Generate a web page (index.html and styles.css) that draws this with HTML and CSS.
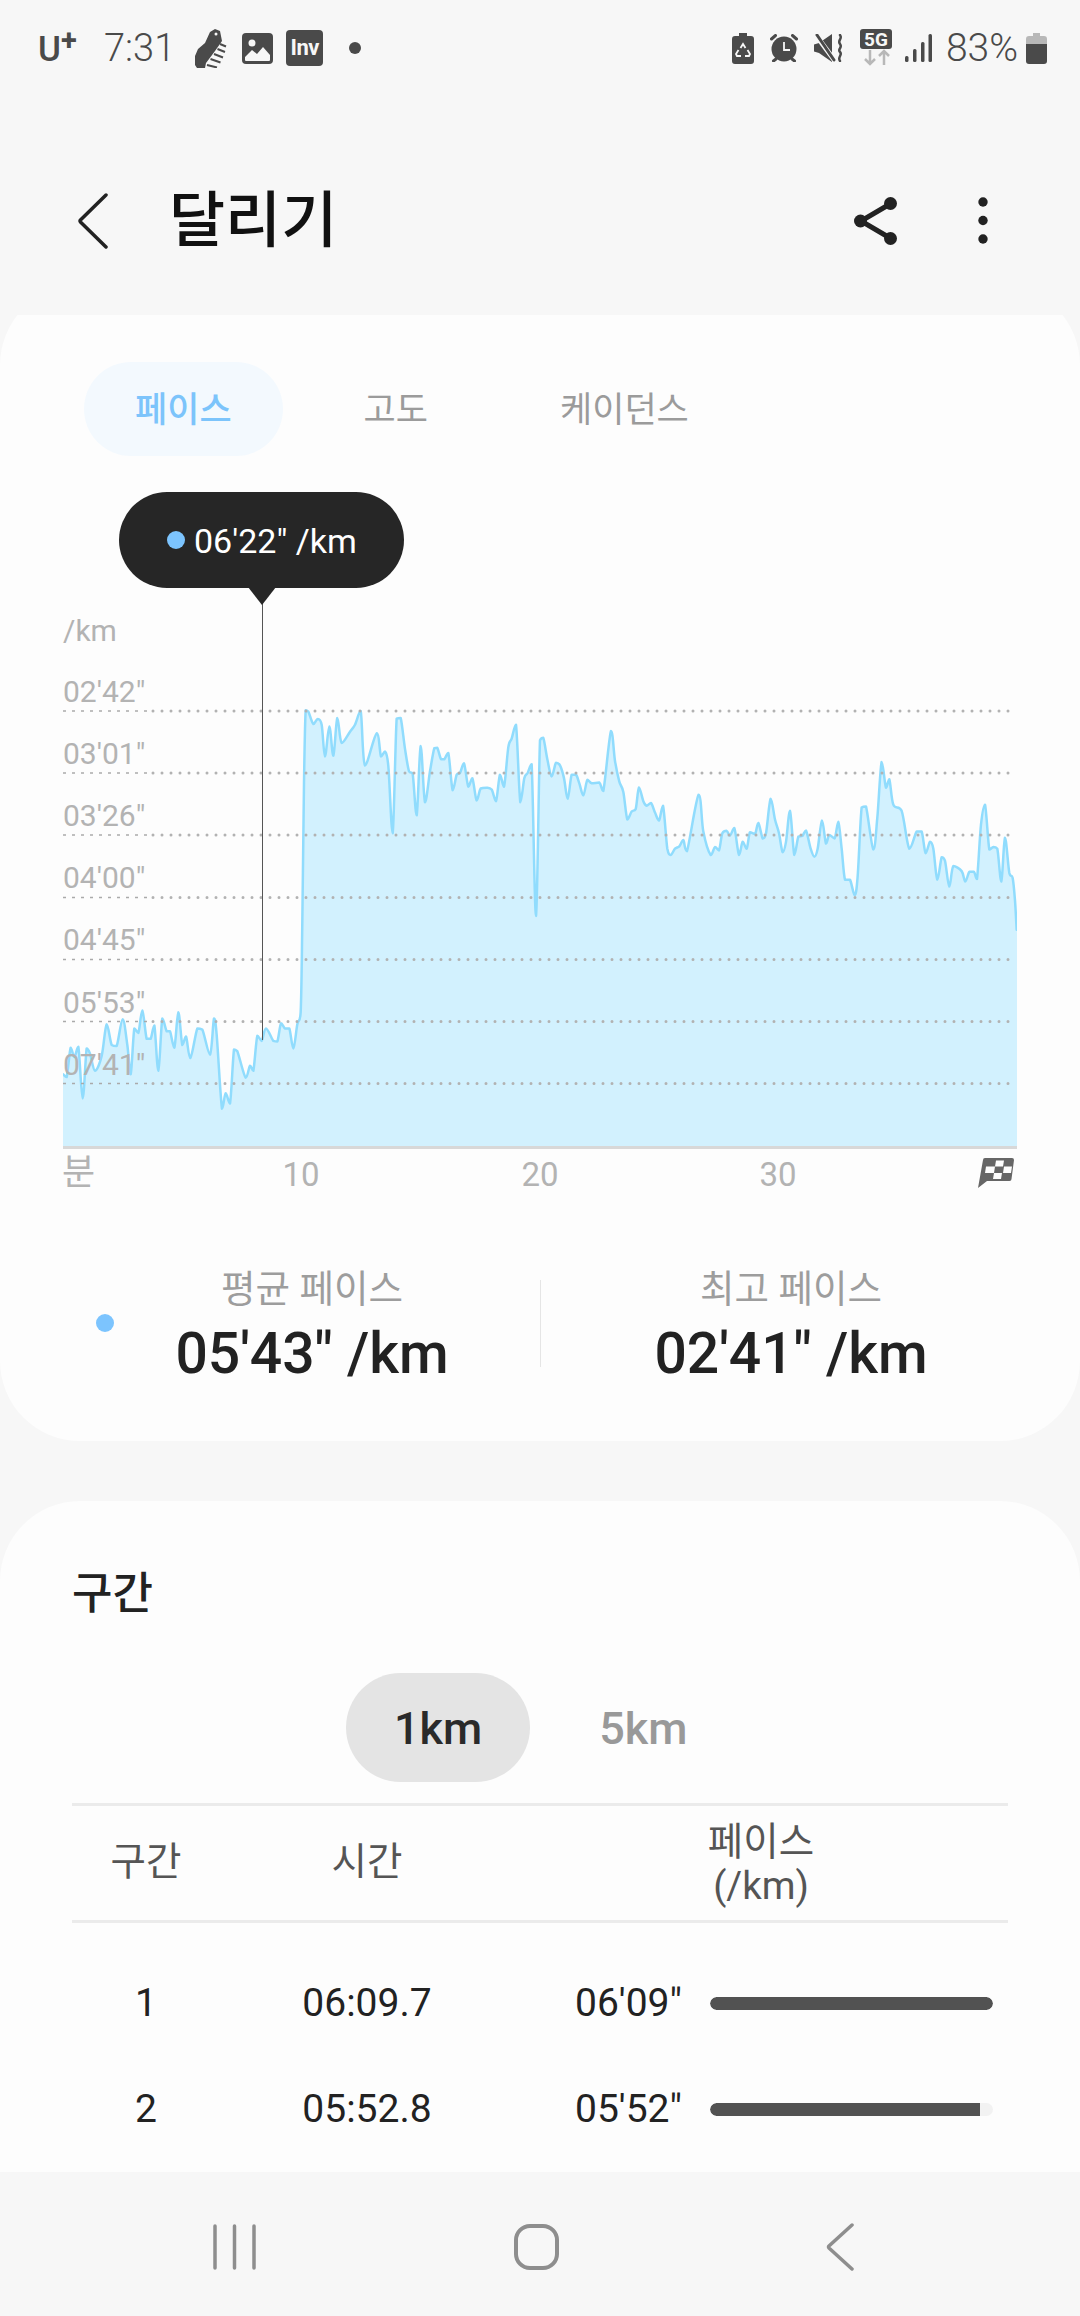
FILE: index.html
```html
<!DOCTYPE html>
<html lang="ko">
<head>
<meta charset="utf-8">
<title>달리기</title>
<link rel="stylesheet" href="styles.css">
<script src="script.js" defer></script>
</head>
<body>
<div class="phone">
  <header class="status">
    <div class="status-left">
      <span class="carrier">U<span class="carrier-plus">+</span></span>
      <span class="clock">7:31</span>
      <svg class="ic-shoe" viewBox="0 0 32 39"><path class="ink" d="M15 3l5-3 5 2 2 10-7 10-9 12-1 5H2l-2-3v-9l3-7 7-6z"/><path class="stripe" d="M25 15l6 2.500M22.500 20l7.500 3M19 25l9 3.500M15.500 30l10 3.500M12 36l10 2.500"/><circle class="cut-dot" cx="21" cy="5" r="1.500"/></svg>
      <svg class="ic-image" viewBox="0 0 31 31"><rect class="ink" width="31" height="31" rx="4"/><circle class="paper" cx="10" cy="10" r="3.500"/><path class="paper" d="M3 27v-3l7-7 5 4 6-7 7 8v5a1 1 0 0 1-1 1H4a1 1 0 0 1-1-1z"/></svg>
      <span class="inv">Inv</span>
      <span class="notif-dot"></span>
    </div>
    <div class="status-right">
      <svg class="ic-care" viewBox="0 0 22 31"><path class="ink" d="M7 0h8v3h4a3 3 0 0 1 3 3v22a3 3 0 0 1-3 3H3a3 3 0 0 1-3-3V6a3 3 0 0 1 3-3h4z"/><path class="cut" d="M8.500 15l2.500-4 2.500 4M15.500 17l2.500 4-1 2h-4M9 23H5l-1-2 2.500-4"/></svg>
      <svg class="ic-alarm" viewBox="0 0 28 28"><circle class="ink" cx="14" cy="15" r="12.500"/><path class="cut" d="M14 8v8h6"/><path class="ink-line" d="M1.500 5l4-3.500M26.500 5l-4-3.500M6 25l-2.500 2M22 25l2.500 2"/></svg>
      <svg class="ic-mute" viewBox="0 0 30 28"><path class="ink" d="M0 10.500l5-1.500L18 0v28L5 19l-5-1.500z"/><path class="slash" d="M1 0l20 27"/><path class="ink-line" d="M3 1l17 25"/><path class="wave" d="M26 1c3 4-3 5 0 9s-3 5 0 8-3 5 0 9"/></svg>
      <svg class="ic-5g" viewBox="0 0 32 37"><rect class="ink" width="32" height="20" rx="3"/><text class="five-g" x="16" y="16.500">5G</text><path class="arrows" d="M10 21v14M5 30l5 5 5-5M24 36V22M19 27l5-5 5 5"/></svg>
      <svg class="ic-signal" viewBox="0 0 27 28"><rect class="ink" x="0" y="22" width="3.500" height="6" rx="1.500"/><rect class="ink" x="8" y="15" width="3.500" height="13" rx="1.500"/><rect class="ink" x="16" y="8" width="3.500" height="20" rx="1.500"/><rect class="ink" x="23.500" y="0" width="3.500" height="28" rx="1.500"/></svg>
      <span class="percent">83%</span>
      <svg class="ic-batt" viewBox="0 0 21 31"><path class="batt-top" d="M7 0h7v3h4a3 3 0 0 1 3 3v6H0V6a3 3 0 0 1 3-3h4z"/><path class="ink" d="M0 11h21v17a3 3 0 0 1-3 3H3a3 3 0 0 1-3-3z"/></svg>
    </div>
  </header>

  <div class="appbar">
    <svg class="ic-back" viewBox="0 0 30 56"><path d="M28 2L2.500 27a1.500 1.500 0 0 0 0 2L28 54"/></svg>
    <h1 class="title">달리기</h1>
    <svg class="ic-share" viewBox="0 0 43 48"><path class="share-line" d="M36 7L7 24l29 17"/><circle class="share-node" cx="36.500" cy="6.500" r="6.500"/><circle class="share-node" cx="6.500" cy="24" r="6.500"/><circle class="share-node" cx="36.500" cy="41.500" r="6.500"/></svg>
    <svg class="ic-more" viewBox="0 0 10 47"><circle class="share-node" cx="5" cy="5" r="4.700"/><circle class="share-node" cx="5" cy="23.500" r="4.700"/><circle class="share-node" cx="5" cy="42" r="4.700"/></svg>
  </div>

  <main class="scroll">
    <section class="card card-chart">
      <div class="tabs">
        <span class="tab tab-active">페이스</span>
        <span class="tab">고도</span>
        <span class="tab">케이던스</span>
      </div>

      <div class="chart">
        <svg class="chart-svg" viewBox="0 456 1080 784">
          <defs><clipPath id="plot"><rect x="63" y="640" width="954" height="506"/></clipPath></defs>
          <g clip-path="url(#plot)">
            <path id="pace-area" class="area" transform="translate(40 680) scale(.33333 .34435)" d="M69 1145L80 1153 92 1068 103 1095 115 1065 128 1215 140 1070 150 1085 165 1135 185 1092 200 1000 215 1060 230 1063 248 985 262 1060 272 1145 283 1012 295 1025 307 960 320 1042 332 1042 343 1003 355 1135 367 983 380 1020 390 1020 403 1068 415 965 427 1060 438 1035 451 1098 472 1012 487 1015 510 1088 522 983 530 1030 546 1245 557 1200 570 1230 582 1073 592 1078 617 1155 630 1120 640 1135 652 1033 665 1048 678 1012 700 1048 712 1050 723 997 735 1012 748 1012 760 1070 772 1000 782 965 787 700 792 300 797 88 805 92 820 128 833 113 845 130 855 222 868 135 880 220 892 110 905 183 930 150 945 130 962 90 975 248 1010 155 1023 222 1035 208 1045 250 1058 445 1070 112 1082 110 1095 200 1107 265 1118 272 1130 393 1142 192 1155 355 1170 265 1183 198 1192 197 1203 230 1213 230 1225 212 1238 320 1250 275 1260 270 1272 242 1285 310 1297 285 1310 350 1322 315 1340 313 1355 318 1368 352 1380 275 1392 310 1405 195 1415 170 1428 130 1441 355 1453 285 1463 270 1475 245 1488 685 1500 175 1510 168 1522 230 1535 280 1548 240 1560 248 1572 285 1583 345 1595 275 1608 275 1618 300 1630 335 1642 290 1655 300 1678 298 1690 322 1713 148 1725 235 1738 295 1750 325 1762 405 1775 382 1787 375 1797 312 1810 352 1820 365 1833 357 1845 385 1857 408 1869 365 1882 490 1892 508 1905 490 1918 483 1930 465 1941 497 1976 333 1990 440 2012 508 2025 485 2037 495 2047 445 2060 438 2070 452 2083 430 2097 508 2108 470 2120 490 2130 442 2145 447 2155 415 2168 460 2178 445 2192 345 2205 405 2217 445 2228 500 2238 470 2250 380 2263 508 2275 455 2287 453 2298 437 2312 490 2323 513 2333 490 2346 408 2358 475 2368 450 2384 460 2395 412 2405 490 2415 580 2430 580 2444 625 2453 570 2465 370 2478 367 2500 492 2512 400 2525 238 2538 313 2548 288 2560 362 2585 380 2608 490 2630 440 2645 440 2657 503 2670 470 2680 490 2692 580 2705 515 2715 525 2728 600 2740 540 2765 555 2776 585 2788 557 2802 557 2811 578 2823 420 2835 362 2848 492 2860 485 2872 490 2884 585 2895 458 2908 560 2918 575 2925 640 2930 725 2960 725 2960 1500 30 1500 30 1145Z"/>
          </g>
          <path class="grid-faint" d="M63 711H148M63 773H148M63 835H148M63 897.500H148M63 959.500H148M63 1021.500H148M63 1083.500H148"/>
          <path class="grid" d="M153 711H1010M153 773H1010M153 835H1010M153 897.500H1010M153 959.500H1010M153 1021.500H1010M153 1083.500H1010"/>
          <rect class="axis" x="63" y="1146" width="954" height="3"/>
          <text class="axis-label" x="63" y="641">/km</text>
          <text class="axis-label" x="63" y="702">02'42"</text>
          <text class="axis-label" x="63" y="764">03'01"</text>
          <text class="axis-label" x="63" y="826">03'26"</text>
          <text class="axis-label" x="63" y="888">04'00"</text>
          <text class="axis-label" x="63" y="950">04'45"</text>
          <text class="axis-label" x="63" y="1013">05'53"</text>
          <text class="axis-label" x="63" y="1075">07'41"</text>
          <text class="axis-label axis-ko" x="62" y="1185">분</text>
          <text class="axis-label axis-mid" x="301" y="1186">10</text>
          <text class="axis-label axis-mid" x="540" y="1186">20</text>
          <text class="axis-label axis-mid" x="778" y="1186">30</text>
          <path class="flag" d="M985 1158h27a2 2 0 0 1 2 2l-2.500 19a2 2 0 0 1-2 2H987l-9 7 5-28a2 2 0 0 1 2-2z"/>
          <path class="flag-check" d="M996 1160.500h8l-1 6h-8zM986 1166.500h9l-1 6.500h-9zM1004 1166.500h8l-1 6.500h-8zM994 1173h8l-1 6h-8z"/>
          <line class="cursor" x1="262.500" y1="600" x2="262.500" y2="1040"/>
        </svg>
        <div class="tooltip"><span class="dot"></span><span class="tooltip-text">06'22" /km</span></div>
      </div>

      <div class="stats">
        <span class="dot stats-dot"></span>
        <div class="stat stat-avg">
          <div class="stat-label">평균 페이스</div>
          <div class="stat-value">05'43" /km</div>
        </div>
        <span class="stat-rule"></span>
        <div class="stat stat-best">
          <div class="stat-label">최고 페이스</div>
          <div class="stat-value">02'41" /km</div>
        </div>
      </div>
    </section>

    <section class="card card-laps">
      <h2 class="laps-title">구간</h2>
      <div class="segment">
        <span class="seg seg-active">1km</span>
        <span class="seg">5km</span>
      </div>
      <div class="laps-head">
        <span>구간</span>
        <span>시간</span>
        <span>페이스<br>(/km)</span>
      </div>
      <div class="lap">
        <span>1</span>
        <span>06:09.7</span>
        <div class="lap-pace"><span class="lap-value">06'09"</span><span class="track"><span class="fill" style="width:100%"></span></span></div>
      </div>
      <div class="lap">
        <span>2</span>
        <span>05:52.8</span>
        <div class="lap-pace"><span class="lap-value">05'52"</span><span class="track"><span class="fill fill-part" style="width:95.4%"></span></span></div>
      </div>
    </section>
  </main>

  <nav class="navbar">
    <svg class="nav-recent" viewBox="0 0 43 46"><path d="M2 2v42M21.500 2v42M41 2v42"/></svg>
    <svg class="nav-home" viewBox="0 0 45 46"><rect x="2" y="2" width="41" height="42" rx="14"/></svg>
    <svg class="nav-back" viewBox="0 0 28 48"><path d="M26 2L3 23a1.500 1.500 0 0 0 0 2l23 21"/></svg>
  </nav>
</div>
</body>
</html>
```
FILE: styles.css
```css
* { box-sizing: border-box; }
html, body { margin: 0; padding: 0; }
body { background: #f7f7f7; font-family: Roboto, "Noto Sans CJK KR", sans-serif; color: #222; }
.phone { width: 1080px; height: 2316px; overflow: hidden; display: flex; flex-direction: column; }

/* status bar */
.status { height: 96px; flex: none; display: flex; align-items: center; justify-content: space-between; padding: 0 33px 0 38px; color: #4a4a4a; }
.status-left, .status-right { display: flex; align-items: center; }
.carrier { font-size: 35px; font-weight: 500; line-height: 34px; width: 40px; position: relative; top: 2px; }
.carrier-plus { font-size: 29px; font-weight: 700; position: absolute; left: 23px; top: -10px; }
.clock { font-size: 38px; font-weight: 300; margin-left: 26px; }
.ic-shoe { width: 32px; height: 39px; margin-left: 20px; }
.ic-image { width: 31px; height: 31px; margin-left: 15px; }
.inv { width: 37px; height: 36px; margin-left: 13px; border-radius: 4px; background: #4a4a4a; color: #f7f7f7; font-size: 22px; font-weight: 700; line-height: 36px; text-align: center; letter-spacing: -.5px; }
.notif-dot { width: 12px; height: 12px; margin-left: 26px; border-radius: 50%; background: #4a4a4a; }
.ink { fill: #4a4a4a; }
.paper { fill: #f7f7f7; }
.stripe { fill: none; stroke: #4a4a4a; stroke-width: 2; }
.cut { fill: none; stroke: #f7f7f7; stroke-width: 1.8; }
.cut-dot { fill: #f7f7f7; }
.ink-line { fill: none; stroke: #4a4a4a; stroke-width: 3; stroke-linecap: round; }
.slash { fill: none; stroke: #f7f7f7; stroke-width: 5; }
.wave { fill: none; stroke: #4a4a4a; stroke-width: 2.500; stroke-linecap: round; }
.arrows { fill: none; stroke: #b8b8b8; stroke-width: 2.500; }
.five-g { fill: #f7f7f7; font-size: 19px; font-weight: 700; text-anchor: middle; }
.batt-top { fill: #b8b8b8; }
.status-right { gap: 16px; }
.ic-care { width: 22px; height: 31px; }
.ic-alarm { width: 28px; height: 28px; }
.ic-mute { width: 30px; height: 28px; }
.ic-5g { width: 32px; height: 37px; position: relative; top: -1px; }
.ic-signal { width: 27px; height: 28px; margin-left: -3px; }
.percent { font-size: 39px; font-weight: 300; margin-left: -2px; }
.ic-batt { width: 21px; height: 31px; margin-left: -8px; }

/* app bar */
.appbar { height: 219px; flex: none; display: flex; align-items: center; padding: 30px 0 0 78px; }
.ic-back { width: 30px; height: 56px; }
.ic-back path { fill: none; stroke: #222; stroke-width: 3.500; stroke-linecap: round; }
.title { margin: 0 0 0 61px; font-size: 61px; font-weight: 500; line-height: 80px; color: #111; flex: 1; }
.ic-share { width: 43px; height: 48px; margin-right: 81px; }
.share-line { fill: none; stroke: #222; stroke-width: 5; }
.share-node { fill: #222; }
.ic-more { width: 10px; height: 47px; margin-right: 92px; }

/* scrolling content */
.scroll { flex: 1; min-height: 0; overflow: hidden; }
.card { background: #fdfdfd; border-radius: 80px; }
.card-chart { margin-top: -30px; height: 1156px; padding-top: 77px; }
.tabs { display: flex; gap: 30px; padding-left: 84px; }
.tab { height: 94px; padding: 4px 51px 0; border-radius: 47px; font-size: 35px; line-height: 90px; color: #9b9b9b; }
.tab-active { background: #f3f9fe; color: #7cc4fb; font-weight: 500; }

/* chart */
.chart { position: relative; height: 784px; }
.chart-svg { display: block; width: 1080px; height: 784px; }
.area { fill: #d2f1fe; stroke: #90dcfd; stroke-width: 2.500; stroke-linejoin: round; vector-effect: non-scaling-stroke; }
.grid { fill: none; stroke: #b2b2b2; stroke-width: 3; stroke-linecap: round; stroke-dasharray: 0 9; }
.grid-faint { fill: none; stroke: #aaa; stroke-width: 1.500; stroke-dasharray: 3 6; }
.axis { fill: #d8d8d8; }
.axis-label { fill: #b3b3b3; font-size: 30px; }
.axis-ko { font-size: 36px; }
.axis-mid { font-size: 33px; text-anchor: middle; }
.flag { fill: #666; }
.flag-check { fill: #fdfdfd; }
.cursor { stroke: #555; stroke-width: 1; }
.tooltip { position: absolute; left: 119px; top: 36px; width: 285px; height: 96px; padding-left: 48px; border-radius: 48px; background: #262626; color: #fff; font-size: 34px; display: flex; align-items: center; gap: 9px; }
.tooltip-text { padding-top: 2px; }
.tooltip::after { content: ""; position: absolute; left: 129px; top: 95px; border-style: solid; border-width: 18px 14px 0; border-color: #262626 transparent transparent; }
.dot { width: 18px; height: 18px; border-radius: 50%; background: #7cc4fe; flex: none; }

/* stats */
.stats { display: flex; align-items: flex-start; padding-left: 96px; }
.stats-dot { margin-top: 74px; }
.stat { text-align: center; }
.stat-avg { width: 396px; margin-right: 30px; }
.stat-best { width: 500px; }
.stat-rule { width: 1px; height: 87px; margin-top: 40px; background: #e5e5e5; }
.stat-label { margin-top: 26px; font-size: 37.500px; line-height: 46px; color: #9d9d9d; }
.stat-value { margin-top: 6px; font-size: 57px; font-weight: 500; line-height: 72px; color: #222; }

/* laps */
.card-laps { margin-top: 60px; padding: 63px 72px 0; height: 800px; }
.laps-title { margin: 0; font-size: 44px; font-weight: 500; line-height: 60px; color: #222; }
.segment { display: flex; gap: 21px; margin: 49px 0 21px 274px; }
.seg { height: 109px; padding: 0 48px; border-radius: 55px; font-size: 45px; font-weight: 500; line-height: 112px; color: #999; }
.seg-active { background: #e4e4e4; color: #2a2a2a; }
.laps-head { display: grid; grid-template-columns: 148px 294px 494px; align-items: center; height: 120px; padding-top: 2px; border-top: 3px solid #ebebeb; border-bottom: 3px solid #ebebeb; font-size: 38.500px; line-height: 44px; color: #555; text-align: center; }
.laps-head span:not(:last-child) { padding-bottom: 4px; }
.lap { display: grid; grid-template-columns: 148px 294px 494px; align-items: center; height: 106px; padding-top: 2px; font-size: 39px; color: #222; text-align: center; }
.laps-head + .lap { margin-top: 26px; }
.lap-pace { display: flex; align-items: center; gap: 28px; }
.lap-value { width: 168px; text-align: right; }
.track { width: 283px; height: 13px; border-radius: 7px; background: #f2f2f2; overflow: hidden; display: block; }
.fill { display: block; height: 100%; background: #525252; border-radius: 7px; }
.fill-part { border-radius: 7px 0 0 7px; }

/* navigation bar */
.navbar { height: 144px; flex: none; display: flex; align-items: center; padding: 5px 0 0 213px; gap: 258px; background: #f7f7f7; }
.nav-recent { width: 43px; height: 46px; }
.nav-recent path, .nav-back path { fill: none; stroke: #8e8e8e; stroke-width: 3.500; stroke-linecap: round; }
.nav-home { width: 45px; height: 46px; }
.nav-home rect { fill: none; stroke: #8e8e8e; stroke-width: 4; }
.nav-back { width: 28px; height: 48px; margin-left: 9px; }
```
FILE: script.js
```js
// Turn the sampled pace points of the chart into a smooth curve,
// keeping each segment's control points inside its own y range so peaks do not overshoot.
var area = document.getElementById('pace-area');
var n = area.getAttribute('d').match(/[\d.]+/g).map(Number);
var pts = [];
for (var i = 0; i < n.length; i += 2) pts.push([n[i], n[i + 1]]);
var closing = pts.splice(pts.length - 4);
function clamp(v, p, q) { return Math.min(Math.max(v, Math.min(p, q)), Math.max(p, q)); }
var d = 'M' + pts[0].join(' ');
for (var j = 0; j < pts.length - 1; j++) {
  var a = pts[Math.max(j - 1, 0)], b = pts[j], c = pts[j + 1], e = pts[Math.min(j + 2, pts.length - 1)];
  d += 'C' + (b[0] + (c[0] - a[0]) / 6) + ' ' + clamp(b[1] + (c[1] - a[1]) / 6, b[1], c[1]) + ' ' +
    (c[0] - (e[0] - b[0]) / 6) + ' ' + clamp(c[1] - (e[1] - b[1]) / 6, b[1], c[1]) + ' ' + c[0] + ' ' + c[1];
}
closing.forEach(function (p) { d += 'L' + p.join(' '); });
area.setAttribute('d', d + 'Z');
```
